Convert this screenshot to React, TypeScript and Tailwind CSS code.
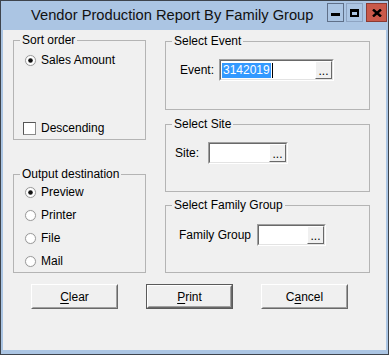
import React from "react";

function Radio({ checked, label }: { checked?: boolean; label: string }) {
  return (
    <div className="flex h-[16px] items-center">
      <svg width="13" height="13" viewBox="0 0 13 13">
        <circle cx="6.5" cy="6.5" r="6" fill="#e6e6e6" />
        <circle cx="6.5" cy="6.5" r="5" fill="#ffffff" stroke="#9a9a9a" strokeWidth="1" />
        {checked && <circle cx="6.5" cy="6.5" r="2.3" fill="#111111" />}
      </svg>
      <span className="ml-[4px]">{label}</span>
    </div>
  );
}

function Group({
  label,
  className,
  children,
}: {
  label: string;
  className: string;
  children?: React.ReactNode;
}) {
  return (
    <fieldset className={`border border-[#b4b4b4] ${className}`}>
      <legend className="ml-[6px] px-[2px] leading-[16px]">{label}</legend>
      {children}
    </fieldset>
  );
}

function TextBox({ className, children }: { className: string; children?: React.ReactNode }) {
  return (
    <div
      className={`h-[22px] border border-t-[#a0a0a0] border-l-[#a0a0a0] border-r-white border-b-white ${className}`}
    >
      <div className="flex h-full border border-t-[#696969] border-l-[#696969] border-r-[#e3e3e3] border-b-[#e3e3e3] bg-white">
        <div className="flex flex-1 items-center pl-px">{children}</div>
        <div className="w-[17px] h-full border border-t-white border-l-white border-r-[#696969] border-b-[#696969] bg-[#f0f0f0] flex justify-center items-end leading-[14px] text-[12px]">
          ...
        </div>
      </div>
    </div>
  );
}

function Button({ children, isDefault }: { children: React.ReactNode; isDefault?: boolean }) {
  const inner = (
    <div className="h-full border border-t-white border-l-white border-r-[#696969] border-b-[#696969]">
      <div className="flex h-full items-center justify-center border border-t-[#f0f0f0] border-l-[#f0f0f0] border-r-[#a0a0a0] border-b-[#a0a0a0] bg-[#f0f0f0]">
        {children}
      </div>
    </div>
  );
  if (isDefault) {
    return <div className="w-[87px] h-[25px] border border-[#5a5a5a]">{inner}</div>;
  }
  return <div className="w-[87px] h-[25px]">{inner}</div>;
}

export default function App() {
  return (
    <div className="w-[389px] h-[355px] bg-[#abc5e3] border border-[#3e444c] flex flex-col text-black text-[12px] font-['Liberation_Sans',Arial,sans-serif]">
      {/* title bar */}
      <div className="h-[29px] flex items-center">
        <div className="flex-1 pl-[30px] text-[14.7px] text-[#111]">
          Vendor Production Report By Family Group
        </div>
        <div className="flex self-start mt-[2px] mr-[1px] h-[19px]">
          <div className="w-[17px] h-full border border-[#5f7089] bg-[#abc5e3] flex items-center justify-center">
            <svg width="9" height="9" viewBox="0 0 9 9">
              <rect x="0" y="5" width="9" height="3" fill="#000" />
            </svg>
          </div>
          <div className="ml-[2px] w-[17px] h-full border border-[#8ea4c2] bg-[#abc5e3] flex items-center justify-center">
            <svg width="9" height="8" viewBox="0 0 9 8">
              <path d="M0 0H9V8H0Z M2 3V6H7V3Z" fill="#000" fillRule="evenodd" />
            </svg>
          </div>
          <div className="ml-[3px] w-[21px] h-full border border-[#8c3a32] bg-[#c9594a] flex items-center justify-center">
            <svg width="10" height="8" viewBox="0 0 10 8">
              <path d="M1 0.5L9 7.5M9 0.5L1 7.5" stroke="#000" strokeWidth="2.4" />
            </svg>
          </div>
        </div>
      </div>

      {/* client area */}
      <div className="flex-1 mx-[2px] mb-[4px] bg-[#f0f0f0] flex flex-col">
        <div className="flex pl-[10px] gap-[19px]">
          <div className="w-[133px] flex flex-col">
            <Group label="Sort order" className="mt-[2px] h-[108px]">
              <div className="pl-[9px] flex flex-col">
                <div className="mt-[4px] pl-px">
                  <Radio checked label="Sales Amount" />
                </div>
                <div className="mt-[52px] flex h-[16px] items-center">
                  <div className="w-[13px] h-[13px] border border-t-[#555] border-l-[#555] border-r-[#8a8a8a] border-b-[#8a8a8a] bg-white" />
                  <span className="ml-[5px]">Descending</span>
                </div>
              </div>
            </Group>
            <Group label="Output destination" className="mt-[26px] h-[107px]">
              <div className="pl-[10px] flex flex-col gap-[7px]">
                <div className="mt-[2px]">
                  <Radio checked label="Preview" />
                </div>
                <Radio label="Printer" />
                <Radio label="File" />
                <Radio label="Mail" />
              </div>
            </Group>
          </div>

          <div className="w-[205px] flex flex-col">
            <Group label="Select Event" className="mt-[3px] h-[77px]">
              <div className="mt-[10px] pl-[14px] flex items-center">
                <span className="w-[39px]">Event:</span>
                <TextBox className="w-[115px]">
                  <span className="bg-[#3399ff] text-white leading-[15px] px-px">3142019</span>
                  <span className="ml-px w-px h-[15px] bg-black" />
                </TextBox>
              </div>
            </Group>
            <Group label="Select Site" className="mt-[6px] h-[76px]">
              <div className="mt-[10px] pl-[9px] flex items-center">
                <span className="w-[33px]">Site:</span>
                <TextBox className="w-[80px]" />
              </div>
            </Group>
            <Group label="Select Family Group" className="mt-[5px] h-[76px]">
              <div className="mt-[11px] pl-[13px] flex items-center">
                <span className="w-[78px]">Family Group</span>
                <TextBox className="w-[69px]" />
              </div>
            </Group>
          </div>
        </div>

        <div className="mt-[11px] flex pl-[28px] gap-[28px]">
          <Button>
            <span>
              <u className="underline-offset-2">C</u>lear
            </span>
          </Button>
          <Button isDefault>
            <span>
              <u className="underline-offset-2">P</u>rint
            </span>
          </Button>
          <Button>
            <span>
              C<u className="underline-offset-2">a</u>ncel
            </span>
          </Button>
        </div>
      </div>
    </div>
  );
}
